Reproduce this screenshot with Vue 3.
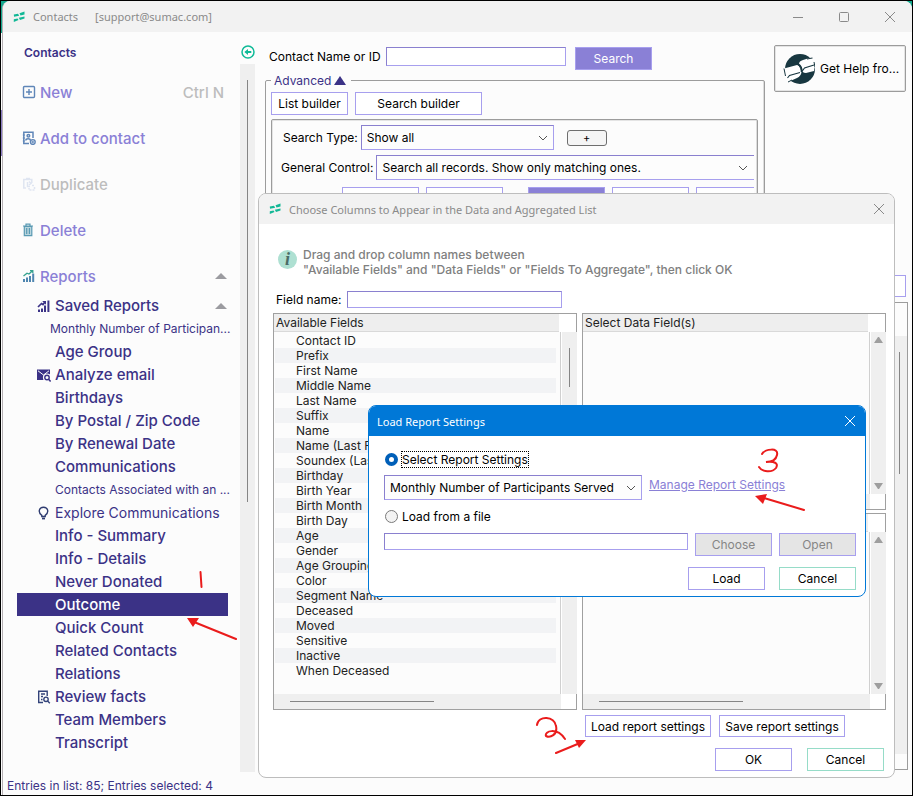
<script setup>
import { ref } from 'vue'

const reportSource = ref('saved')

const reports = [
  { label: 'Saved Reports', icon: 'chart', expandable: true },
  { label: 'Monthly Number of Participan...', small: true, outdent: true },
  { label: 'Age Group' },
  { label: 'Analyze email', icon: 'mail' },
  { label: 'Birthdays' },
  { label: 'By Postal / Zip Code' },
  { label: 'By Renewal Date' },
  { label: 'Communications' },
  { label: 'Contacts Associated with an ...', small: true },
  { label: 'Explore Communications', icon: 'bulb', medium: true },
  { label: 'Info - Summary' },
  { label: 'Info - Details' },
  { label: 'Never Donated' },
  { label: 'Outcome', selected: true },
  { label: 'Quick Count' },
  { label: 'Related Contacts' },
  { label: 'Relations' },
  { label: 'Review facts', icon: 'doc' },
  { label: 'Team Members' },
  { label: 'Transcript' },
]

const fields = [
  'Contact ID', 'Prefix', 'First Name', 'Middle Name', 'Last Name', 'Suffix', 'Name',
  'Name (Last First)', 'Soundex (Last)', 'Birthday', 'Birth Year', 'Birth Month',
  'Birth Day', 'Age', 'Gender', 'Age Grouping', 'Color', 'Segment Name', 'Deceased',
  'Moved', 'Sensitive', 'Inactive', 'When Deceased',
]
</script>

<template>
  <div class="desktop">
    <div class="window">
      <header class="titlebar">
        <svg class="logo" viewBox="0 0 12 12" aria-hidden="true">
          <path d="M0.800 3.600 5 2.800 6.200 4.800 1 5.800zM6.500 2.200 11.500 0.600V3.600L7.500 4.600zM0.800 8.200 4.500 7.400 5.500 9 0.800 11zM5.800 6.800 11.500 5.400V7.600L7 9z" />
        </svg>
        <span>Contacts</span>
        <span class="account">[support@sumac.com]</span>
        <div class="window-buttons">
          <button type="button" aria-label="Minimize"><svg viewBox="0 0 12 12"><path d="M1 6.5H11" /></svg></button>
          <button type="button" aria-label="Maximize"><svg viewBox="0 0 12 12"><rect x="1.5" y="1.5" width="9" height="9" rx="1" /></svg></button>
          <button type="button" aria-label="Close"><svg viewBox="0 0 12 12"><path d="M1 1 11 11M11 1 1 11" /></svg></button>
        </div>
      </header>

      <div class="workspace">
        <nav class="sidebar">
          <h1>Contacts</h1>
          <ul class="actions">
            <li>
              <button type="button">
                <svg viewBox="0 0 14 14" fill="none" stroke="#5f86b8" stroke-width="1.4"><rect x="1.5" y="1.5" width="11" height="11" rx="1" /><path d="M7 4V10M4 7H10" /></svg>
                New
                <kbd>Ctrl N</kbd>
              </button>
            </li>
            <li>
              <button type="button">
                <svg viewBox="0 0 14 14" fill="none" stroke="#5f86b8" stroke-width="1.5"><path d="M7 12.5H1.8V1.2H11V7" /><circle cx="6.4" cy="4.8" r="1.3" /><path d="M3.8 9.500C4 7.200 8.200 7.200 8.600 9.500" /><path d="M0.800 4H3M0.800 7H3M0.800 10H3" stroke-width="1" /><circle cx="10.8" cy="11" r="2.4" stroke-width="1.4" /><path d="M9.400 11H12.200M10.800 9.600V12.400" stroke-width="1" /></svg>
                Add to contact
              </button>
            </li>
            <li>
              <button type="button" disabled>
                <svg viewBox="0 0 14 14" fill="none" stroke="#dfe5f1" stroke-width="1.5"><path d="M4 11H1.8V2.500H9.800V6M4 1.500H8" /><path d="M5.500 5V9.500H8M7 4.500 9 6.500 7 8" /><path d="M10 8.500H12.500M12.500 10V13H7V11" stroke-dasharray="2 1" /></svg>
                Duplicate
              </button>
            </li>
            <li>
              <button type="button">
                <svg viewBox="0 0 14 14" fill="#b9d5dd" stroke="#5a9ab3" stroke-width="1.2"><path d="M2.3 3.5H9.8V12.6H2.3z" /><path d="M1 3H11M4 2.6V1.2H8V2.6M4.7 5V11M7.4 5V11" fill="none" /></svg>
                Delete
              </button>
            </li>
            <li>
              <button type="button">
                <svg viewBox="0 0 14 14"><path d="M1 10H3V13H1zM4 8.5H6V13H4zM7 7H9V13H7zM10.2 4.5H12.2V13H10.2z" fill="#4f86b0" /><path d="M1.5 7 5 4.2 7 5 10.5 1.8M8 1.6H10.8V4" fill="none" stroke="#35a28f" stroke-width="1.3" /></svg>
                Reports
                <span class="caret"></span>
              </button>
            </li>
          </ul>
          <ul class="reports">
            <li v-for="r in reports" :key="r.label">
              <a href="#" :class="{ small: r.small, medium: r.medium, outdent: r.outdent, selected: r.selected }">
                <span class="glyph">
                  <svg v-if="r.icon === 'chart'" viewBox="0 0 14 14" fill="#3b3286"><path d="M1 10.5H3V13H1zM4 9.5H6V13H4zM7 6.5H9V13H7zM10.4 1.5H12.4V13H10.4z" /><path d="M1 8 4.5 4.5 6 5.5 8 3" fill="none" stroke="#3b3286" stroke-width="1.7" /><path d="M5.2 2H9V5.8z" /></svg>
                  <svg v-else-if="r.icon === 'mail'" viewBox="0 0 14 14"><path d="M0 1.5H13V12H0z" fill="#3b3286" /><path d="M1 2.8 6.5 7 12 2.8" fill="none" stroke="#fcfcfc" /><circle cx="10" cy="9.5" r="2.6" fill="#fcfcfc" stroke="#fcfcfc" stroke-width="3" /><circle cx="10" cy="9.5" r="2.2" fill="none" stroke="#3b3286" stroke-width="1.4" /><path d="M11.6 11.2 13.6 13.5" stroke="#3b3286" stroke-width="1.5" /></svg>
                  <svg v-else-if="r.icon === 'bulb'" viewBox="0 0 14 14" fill="none" stroke="#2f3c70" stroke-width="1.4"><path d="M4.8 9.3C.6 6.5 2 1.2 6.5 1.2S12.400 6.500 8.200 9.300V10.500H4.800z" /><path d="M5 12.500H8" stroke-width="1.800" /></svg>
                  <svg v-else-if="r.icon === 'doc'" viewBox="0 0 14 14" fill="none" stroke="#33437a" stroke-width="1.400"><path d="M6 12.500H1.700V1.300H10.200V6M4 4H8M4 6.500H6M4 9.500H5.500" /><circle cx="9" cy="9.300" r="2.200" /><path d="M10.600 11 12.800 13.300" /></svg>
                </span>
                {{ r.label }}
                <span v-if="r.expandable" class="caret"></span>
              </a>
            </li>
          </ul>
        </nav>

        <div class="rail">
          <button type="button" aria-label="Collapse menu">
            <svg viewBox="0 0 14 14" fill="none" stroke="#0fba97" stroke-width="1.500"><circle cx="7" cy="7" r="6" /><path d="M4.500 7H10.300" stroke-width="2" /><path d="M7 4V10L3.400 7z" fill="#0fba97" stroke="none" /></svg>
          </button>
          <div class="rail-track"><span class="thumb"></span></div>
        </div>

        <main class="content">
          <div class="top">
            <div class="search">
              <form class="search-row" @submit.prevent>
                <label for="contact-name">Contact Name or ID</label>
                <input id="contact-name" type="text" class="box" />
                <button type="submit" class="btn filled">Search</button>
              </form>
              <fieldset>
                <legend>Advanced <span class="up"></span></legend>
                <div class="builders">
                  <button type="button" class="btn">List builder</button>
                  <button type="button" class="btn wide">Search builder</button>
                </div>
                <div class="criteria">
                  <div class="criterion type">
                    <label for="search-type">Search Type:</label>
                    <span class="picker">
                      <select id="search-type"><option>Show all</option></select>
                      <svg viewBox="0 0 10 6"><path d="M1 1 5 5 9 1" /></svg>
                    </span>
                    <button type="button" class="plus">+</button>
                  </div>
                  <div class="criterion">
                    <label for="general-control">General Control:</label>
                    <span class="picker open-end">
                      <select id="general-control"><option>Search all records. Show only matching ones.</option></select>
                      <svg viewBox="0 0 10 6"><path d="M1 1 5 5 9 1" /></svg>
                    </span>
                  </div>
                  <div class="operators">
                    <button type="button" class="btn" aria-label="And"></button>
                    <button type="button" class="btn" aria-label="Or"></button>
                    <button type="button" class="btn filled" aria-label="Run"></button>
                    <button type="button" class="btn" aria-label="Clear"></button>
                    <button type="button" class="btn" aria-label="More"></button>
                  </div>
                </div>
              </fieldset>
            </div>
            <div class="help-column">
              <button type="button" class="help">
                <svg viewBox="0 0 32 32">
                  <circle cx="17" cy="16" r="15" fill="#183740" />
                  <path d="M1 15.500 14 12Q16 12 17 15L18.500 19Q18 23 14 25L5 29Q3 27 2.500 23z" fill="#fff" />
                  <path d="M16 11Q16 8 20 7L28 4.500Q31 8 32 12L31 18 23 20Q19 20 18 16z" fill="#fff" />
                  <path d="M4.500 25 6.500 22.500 17 19.500M19 18.500 21.500 15 31 12M24 6 29.500 5" fill="none" stroke="#183740" stroke-width="1.100" />
                  <path d="M15 11Q19.500 14 18.500 19" fill="none" stroke="#183740" stroke-width="1.800" />
                  <path d="M1 15.500 2.500 23M5 29 9 27M31 9 32 14" fill="none" stroke="#183740" />
                </svg>
                Get Help fro...
              </button>
              <button type="button" class="btn below" aria-label="Refresh"></button>
            </div>
          </div>
          <section class="results" aria-label="Contacts list">
            <div class="results-scroll"><span class="thumb"></span></div>
          </section>
        </main>
      </div>

      <footer class="status">Entries in list: 85; Entries selected: 4</footer>
    </div>

    <section class="dialog columns-dialog" role="dialog" aria-labelledby="columns-title">
      <header class="titlebar">
        <svg class="logo" viewBox="0 0 12 12" aria-hidden="true">
          <path d="M0.800 3.600 5 2.800 6.200 4.800 1 5.800zM6.500 2.200 11.500 0.600V3.600L7.500 4.600zM0.800 8.200 4.500 7.400 5.500 9 0.800 11zM5.800 6.800 11.500 5.400V7.600L7 9z" />
        </svg>
        <span id="columns-title">Choose Columns to Appear in the Data and Aggregated List</span>
        <div class="window-buttons">
          <button type="button" aria-label="Close"><svg viewBox="0 0 12 12"><path d="M1 1 11 11M11 1 1 11" /></svg></button>
        </div>
      </header>
      <div class="columns-body">
        <div class="hint">
          <span class="info">i</span>
          <p>Drag and drop column names between<br />"Available Fields" and "Data Fields" or "Fields To Aggregate", then click OK</p>
        </div>
        <div class="field-name">
          <label for="field-name">Field name:</label>
          <input id="field-name" type="text" class="box" />
        </div>
        <div class="lists">
          <div class="list">
            <h2>Available Fields</h2>
            <div class="list-main">
              <ul>
                <li v-for="f in fields" :key="f">{{ f }}</li>
              </ul>
              <div class="vbar"><span class="thumb"></span></div>
            </div>
            <div class="hbar"><span></span></div>
          </div>
          <div class="stack">
            <div class="list targets">
              <h2>Select Data Field(s)</h2>
              <div class="list-main">
                <ul></ul>
                <div class="vbar arrows"><i class="arrow-up"></i><i class="arrow-down"></i></div>
              </div>
              <div class="hbar"><span></span></div>
            </div>
            <div class="list targets">
              <h2>Fields To Aggregate</h2>
              <div class="list-main">
                <ul></ul>
                <div class="vbar arrows"><i class="arrow-up"></i><i class="arrow-down"></i></div>
              </div>
              <div class="hbar"><span></span></div>
            </div>
          </div>
        </div>
        <div class="settings-row">
          <button type="button" class="btn wide">Load report settings</button>
          <button type="button" class="btn wide">Save report settings</button>
        </div>
        <div class="confirm-row">
          <button type="button" class="btn">OK</button>
          <button type="button" class="btn cancel">Cancel</button>
        </div>
      </div>
    </section>

    <section class="dialog load-dialog" role="dialog" aria-labelledby="load-title">
      <header class="titlebar">
        <span id="load-title">Load Report Settings</span>
        <div class="window-buttons">
          <button type="button" aria-label="Close"><svg viewBox="0 0 12 12"><path d="M1 1 11 11M11 1 1 11" /></svg></button>
        </div>
      </header>
      <form class="load-body" @submit.prevent>
        <label class="choice focused">
          <input v-model="reportSource" type="radio" value="saved" />
          <span>Select Report Settings</span>
        </label>
        <div class="saved-row">
          <span class="picker">
            <select aria-label="Report settings"><option>Monthly Number of Participants Served</option></select>
            <svg viewBox="0 0 10 6"><path d="M1 1 5 5 9 1" /></svg>
          </span>
          <a href="#">Manage Report Settings</a>
        </div>
        <label class="choice">
          <input v-model="reportSource" type="radio" value="file" />
          <span>Load from a file</span>
        </label>
        <div class="file-row">
          <input type="text" class="box" aria-label="File path" />
          <button type="button" class="btn" disabled>Choose</button>
          <button type="button" class="btn" disabled>Open</button>
        </div>
        <div class="load-actions">
          <button type="submit" class="btn">Load</button>
          <button type="button" class="btn cancel">Cancel</button>
        </div>
      </form>
    </section>

    <svg class="marks" viewBox="0 0 913 796" aria-hidden="true">
      <path d="M200.500 572 201.500 587M236 639 194 622M762 454C765 449 779 447 777 455 776 460 771 462 766 462 774 461 779 463 776 468 772 473 762 472 759 467M804 510 764 498M537 725C538 715 555 716 556 726 558 735 550 738 546 736 544 731 557 727 565 739M556 753 580 743" />
      <path class="head" d="M187 618 199 618 193 627zM755 496 767 494 763 504zM586 740 575 740 579 748z" />
    </svg>
  </div>
</template>

<style>
body {
  margin: 0;
}
</style>

<style scoped>
* {
  box-sizing: border-box;
}

.desktop {
  position: relative;
  display: flex;
  min-height: 100vh;
  padding-left: 1px;
  border: 1px solid #000;
  background: linear-gradient(#13a88d 0 32px, #fcfcfc 32px 109px, #8a7bc4 109px 155px, #fcfcfc 155px);
  font-family: Inter, "Liberation Sans", sans-serif;
  font-size: 12px;
  line-height: 15px;
  color: #000;
}

button,
input,
select {
  margin: 0;
  font: inherit;
  color: inherit;
}

button {
  padding: 0;
  border: 0;
  background: none;
}

ul,
p,
h1,
h2 {
  margin: 0;
  padding: 0;
  font-size: inherit;
  list-style: none;
}

.window {
  display: flex;
  flex: 1;
  flex-direction: column;
  overflow: hidden;
  border-left: 1px solid #b5b0b4;
  border-radius: 8px 8px 0 0;
  background: #fcfcfc;
}

.titlebar {
  display: flex;
  align-items: center;
  height: 31px;
  flex: none;
  padding: 0 16px 0 10px;
  background: #f2f2f2;
  color: #8a8a8a;
  font-family: "Noto Sans", "Open Sans", sans-serif;
  font-size: 11px;
}

.logo {
  width: 12px;
  height: 12px;
  margin-right: 8px;
  fill: #12b896;
}

.account {
  margin-left: 17px;
}

.window-buttons {
  display: flex;
  gap: 34px;
  margin-left: auto;
}

.window-buttons button {
  display: block;
  height: 12px;
}

.window-buttons svg {
  display: block;
  width: 12px;
  height: 12px;
  fill: none;
  stroke: currentColor;
}

.workspace {
  display: flex;
  flex: 1;
}

.sidebar {
  width: 237px;
  padding-left: 14px;
  font-weight: 500;
  color: #3b3286;
}

.sidebar h1 {
  padding: 13px 7px 9px;
  font-weight: 600;
}

.actions button {
  display: flex;
  align-items: center;
  width: 211px;
  height: 46px;
  padding-left: 5px;
  font-size: 15px;
  color: #8a80d6;
}

.actions button:disabled {
  color: #bdbdbd;
}

.actions svg {
  width: 14px;
  height: 14px;
  margin-right: 4px;
}

.actions kbd {
  margin-left: auto;
  padding-right: 4px;
  font: inherit;
  color: #bdbdbd;
}

.caret {
  margin: 0 1px 0 auto;
  border: 6px solid transparent;
  border-top: 0;
  border-bottom-color: #9b9ba0;
}

.reports {
  margin-top: -5px;
}

.reports a {
  display: flex;
  align-items: center;
  width: 211px;
  height: 23px;
  font-size: 15px;
  color: inherit;
  white-space: nowrap;
  text-decoration: none;
}

.reports .small {
  font-size: 12px;
  font-weight: 400;
}

.reports .medium {
  font-size: 14px;
  font-weight: 400;
}

.reports .selected {
  background: #3b3286;
  color: #fff;
}

.glyph {
  display: flex;
  flex: none;
  width: 38px;
  padding-left: 20px;
}

.outdent .glyph {
  width: 33px;
}

.glyph svg {
  width: 14px;
  height: 14px;
}

.rail {
  display: flex;
  flex-direction: column;
  width: 16px;
  padding: 13px 0 4px;
}

.rail button {
  width: 18px;
  height: 14px;
}

.rail button svg {
  display: block;
  width: 14px;
  height: 14px;
  margin-left: 1px;
}

.rail-track {
  flex: 1;
  width: 15px;
  margin-top: 5px;
  padding: 16px 7px;
  background: #efefef;
}

.thumb {
  display: block;
  width: 1px;
  height: 100%;
  background: #858585;
}

.rail-track .thumb {
  height: 422px;
}

.content {
  display: flex;
  flex: 1;
  flex-direction: column;
  min-width: 0;
  padding: 13px 4px 6px 9px;
}

.top {
  display: flex;
  gap: 9px;
  padding-right: 2px;
}

.search {
  flex: 1;
  min-width: 0;
}

.search-row {
  display: flex;
  align-items: flex-start;
  padding: 2px 0 0 4px;
}

.search-row label {
  width: 117px;
  padding-top: 2px;
}

.search-row .box {
  width: 180px;
  margin-right: 9px;
}

.box {
  height: 19px;
  padding: 0 4px;
  border: 1px solid #a79fee;
  border-top-color: #8a80cf;
  border-left-color: #8a80cf;
  border-radius: 0;
  outline: 0;
  background: #fff;
}

.btn {
  flex: none;
  width: 77px;
  height: 23px;
  border: 1px solid #a79fee;
  background: #fff;
  text-align: center;
}

.btn.wide {
  width: 127px;
}

.btn.filled {
  background: #8a80d6;
  color: #fff;
}

.btn.cancel {
  border-color: #96dcc8;
}

.btn:disabled {
  background: #e5e5e5;
  color: #858585;
}

fieldset {
  min-width: 0;
  height: 186px;
  margin: 2px 0 0;
  padding: 4px 6px 0 5px;
  border: 1px solid #9c9c9c;
  border-radius: 2px;
  box-shadow: inset -1px 0 #dcdcdc;
}

legend {
  display: flex;
  align-items: center;
  gap: 3px;
  height: 16px;
  padding: 0 5px 0 3px;
  color: #3b3286;
}

.up {
  border: 6px solid transparent;
  border-top: 0;
  border-bottom: 9px solid #3b3286;
}

.builders {
  display: flex;
  gap: 7px;
}

.criteria {
  height: 130px;
  margin-top: 4px;
  padding: 5px 3px 0 9px;
  border: 1px solid #9c9c9c;
  border-radius: 2px;
  box-shadow: inset 1px 1px #e4e4e4, inset -1px 0 #dcdcdc;
}

.criterion {
  display: flex;
  align-items: center;
  gap: 3px;
  margin-bottom: 5px;
}

.type {
  padding-left: 2px;
}

.type .picker {
  width: 193px;
}

.picker {
  display: grid;
  align-items: center;
  height: 25px;
}

.picker select,
.picker svg {
  grid-area: 1 / 1;
}

.picker select {
  width: 100%;
  height: 25px;
  padding: 0 5px;
  appearance: none;
  border: 1px solid #a79fee;
  border-top-color: #8a80cf;
  border-left-color: #8a80cf;
  border-radius: 0;
  background: #fdfdfd;
}

.picker svg {
  justify-self: end;
  width: 10px;
  height: 6px;
  margin-right: 6px;
  fill: none;
  stroke: #555;
  pointer-events: none;
}

.open-end {
  flex: 1;
}

.open-end select {
  border-right: 0;
}

.plus {
  width: 40px;
  height: 16px;
  margin-left: 10px;
  border: 1px solid #6e6e6e;
  border-radius: 3px;
  background: #f5f5f5;
  font-size: 11px;
  line-height: 14px;
}

.operators {
  display: flex;
  gap: 7px;
  overflow: hidden;
  padding: 2px 0 0 61px;
}

.operators .filled {
  margin-left: 18px;
}

.help-column {
  display: flex;
  flex-direction: column;
  align-items: flex-end;
  justify-content: space-between;
}

.help {
  display: flex;
  align-items: center;
  gap: 5px;
  width: 132px;
  height: 47px;
  padding: 0 8px;
  border: 1px solid #9c9c9c;
  border-radius: 2px;
  box-shadow: inset 0 0 0 1px #e4e4e4;
  white-space: nowrap;
}

.help svg {
  flex: none;
  width: 32px;
  height: 32px;
}

.below {
  height: 22px;
  margin-bottom: -39px;
}

.results {
  flex: 1;
  margin: 44px 0 0;
  padding: 33px 0 15px;
  border: 1px solid #9c9c9c;
}

.results-scroll {
  width: 15px;
  height: 100%;
  margin-left: auto;
  padding: 16px 7px;
  background: #efefef;
}

.results-scroll .thumb {
  height: 122px;
}

.status {
  padding: 2px 4px 2px;
  color: #3b3286;
}

.dialog {
  position: absolute;
  overflow: hidden;
  border: 1px solid #bdbdbd;
  border-radius: 8px;
  background: #fff;
}

.dialog .titlebar {
  height: 30px;
  padding-right: 9px;
}

.columns-dialog {
  top: 192px;
  left: 257px;
  width: 637px;
}

.columns-body {
  padding: 23px 8px 6px 14px;
}

.hint {
  display: flex;
  align-items: flex-start;
  gap: 6px;
  padding-left: 5px;
  font-weight: 500;
  color: #808080;
}

.info {
  display: flex;
  align-items: center;
  justify-content: center;
  width: 19px;
  height: 19px;
  margin-top: 3px;
  border-radius: 50%;
  background: #aee0d2;
  color: #4b6b66;
  font: italic bold 18px "Liberation Serif", serif;
}

.field-name {
  display: flex;
  align-items: center;
  margin-top: 14px;
  padding-left: 3px;
}

.field-name label {
  width: 71px;
}

.field-name .box {
  width: 215px;
  height: 17px;
}

.lists {
  display: grid;
  grid-template-columns: 1fr 1fr;
  gap: 5px;
  height: 397px;
  margin-top: 5px;
}

.stack {
  display: grid;
  gap: 3px;
}

.list {
  display: flex;
  flex-direction: column;
  min-height: 0;
  border: 1px solid #a0a0a0;
  background: #fff;
}

.list h2 {
  height: 18px;
  margin-right: 17px;
  padding: 1px 2px 0;
  border-bottom: 1px solid #d9d9d9;
  background: #eee;
  font-weight: 400;
  color: #222;
}

.list-main {
  display: flex;
  flex: 1;
  min-height: 0;
}

.list ul {
  flex: 1;
  padding: 1px 4px 0 1px;
  border-right: 1px solid #d0d0d0;
  background: #fcfcfc;
  color: #222;
}

.list li {
  height: 15px;
  padding-left: 21px;
  white-space: nowrap;
}

.list li:nth-child(even) {
  background: #f2f3f5;
}

.vbar {
  width: 15px;
  margin: 0 -1px 0 1px;
  padding: 16px 7px;
  background: #efefef;
}

.vbar .thumb {
  height: 39px;
}

.arrows {
  display: flex;
  flex-direction: column;
  justify-content: space-between;
  padding: 5px 3px;
}

.arrow-up,
.arrow-down {
  border: 4px solid transparent;
  border-top: 0;
  border-bottom: 6px solid #9e9e9e;
}

.arrow-down {
  border-top: 6px solid #9e9e9e;
  border-bottom: 0;
}

.hbar {
  flex: none;
  height: 15px;
  margin-right: 15px;
  padding: 7px 16px;
  background: #efefef;
}

.hbar span {
  display: block;
  width: 144px;
  height: 1px;
  background: #858585;
}

.settings-row {
  display: flex;
  justify-content: flex-end;
  gap: 8px;
  padding: 5px 41px 0 0;
}

.settings-row .btn {
  width: 126px;
  height: 22px;
}

.confirm-row {
  display: flex;
  justify-content: flex-end;
  gap: 15px;
  padding: 11px 2px 0 0;
}

.load-dialog {
  top: 404px;
  left: 367px;
  width: 498px;
  border-color: #0078d7;
}

.load-dialog .titlebar {
  padding-left: 8px;
  background: #0078d7;
  color: #fff;
}

.load-body {
  padding: 15px 9px 6px 15px;
}

.choice {
  display: flex;
  align-items: center;
  gap: 3px;
  height: 17px;
}

.choice input {
  width: 13px;
  height: 13px;
  margin: 0 1px;
  appearance: none;
  border: 1px solid #7a7a7a;
  border-radius: 50%;
  background: #f3f3f3;
}

.choice input:checked {
  border: 4px solid #005fb8;
  background: #fff;
}

.focused span {
  outline: 1px dotted #000;
}

.saved-row {
  display: flex;
  gap: 7px;
  margin: 7px 0 8px;
}

.saved-row .picker {
  width: 258px;
}

.saved-row a {
  margin-top: 2px;
  color: #8a80d6;
}

.file-row {
  display: flex;
  gap: 7px;
  margin-top: 8px;
}

.file-row .box {
  flex: 1;
  height: 17px;
}

.load-actions {
  display: flex;
  justify-content: flex-end;
  gap: 14px;
  margin-top: 11px;
}

.marks {
  position: absolute;
  top: -1px;
  left: -1px;
  width: 913px;
  height: 796px;
  fill: none;
  stroke: #ea1c1c;
  stroke-width: 2;
  stroke-linecap: round;
  pointer-events: none;
}

.marks .head {
  fill: #ea1c1c;
  stroke: none;
}
</style>
